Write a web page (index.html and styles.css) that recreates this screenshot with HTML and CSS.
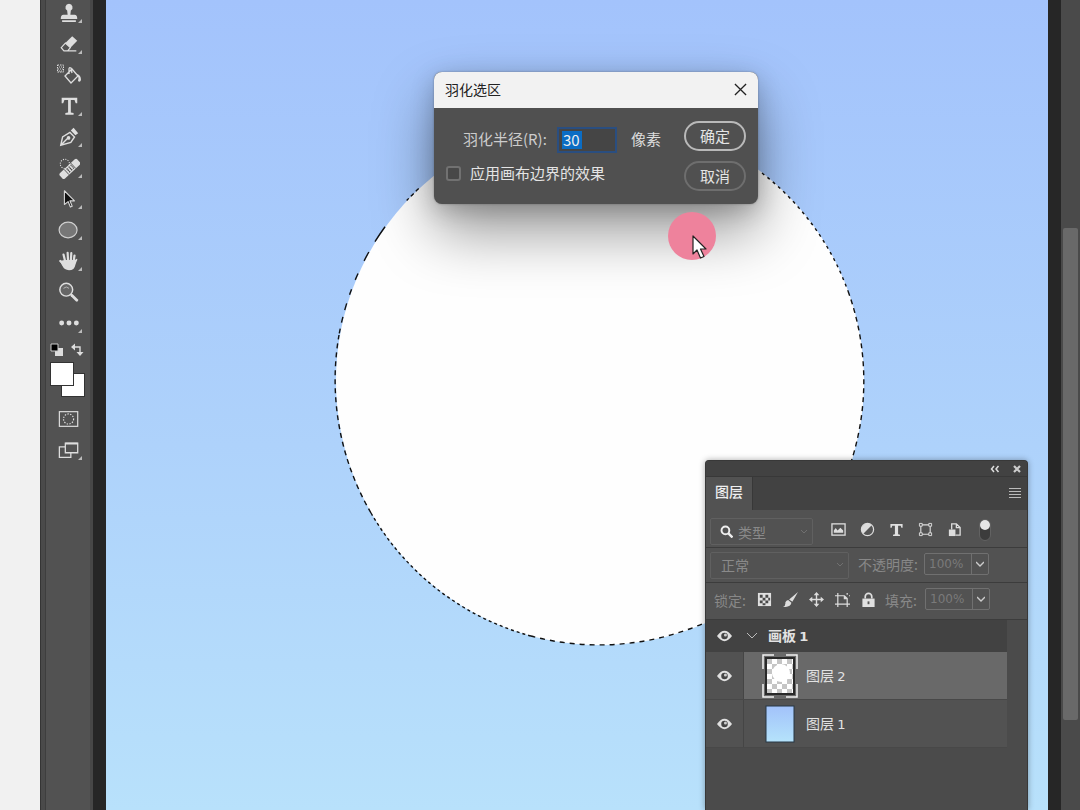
FILE: index.html
```html
<!DOCTYPE html>
<html lang="zh-CN">
<head>
<meta charset="utf-8">
<title>羽化选区</title>
<link rel="stylesheet" href="styles.css">
</head>
<body>
<main class="app">
  <aside class="toolbar" aria-label="工具">
    <div class="tools">
      <button class="tool more" aria-label="仿制图章"><svg viewBox="0 0 24 24"><path fill="#dedede" d="M12 2a4 4 0 0 1 2 7.400l-.5 4.600H18q3 0 3 4.500H3Q3 14 6 14h4.500L10 9.400A4 4 0 0 1 12 2zM4.500 20h15v1.800h-15z"/></svg></button>
      <button class="tool more" aria-label="橡皮擦"><svg viewBox="0 0 24 24"><path fill="#dedede" d="M8 11l7.500-7.500 5.500 5L13.500 16z"/><path fill="none" stroke="#dedede" stroke-width="1.300" d="M8 11l-4.500 5 3 3.500h4l3-3.500zM10 19.600h10"/></svg></button>
      <button class="tool" aria-label="油漆桶"><svg class="wide" viewBox="0 0 28 24"><rect x="2.500" y="2" width="6" height="7" fill="#555" stroke="#ddd" stroke-dasharray="1.500 1"/><path stroke="#ccc" stroke-dasharray="1 1" d="M4 4h4M3 6h5M4 8h4"/><path fill="none" stroke="#dedede" stroke-width="1.300" d="M10 13l7-7 6 7-7 7zM14 11V6q0-2 2-1l1 5"/><path fill="#dedede" d="M22 11q4 1 4 6-1 3-3 1l.5-3z"/></svg></button>
      <button class="tool more" aria-label="文字"><svg viewBox="0 0 24 24"><path fill="#dedede" d="M4 3h17v6h-1.700L18 5.500h-4V19l3 .7V21.500H8v-1.800l3-.7V5.500H7L5.700 9H4z"/></svg></button>
      <button class="tool more" aria-label="钢笔"><svg viewBox="0 0 24 24"><path fill="none" stroke="#dedede" stroke-width="1.500" d="M3 21l2-9 8-5 5 5-4 6-11 3zM3 21l7-7"/><path fill="#dedede" d="M14 5l3-3 5 6-3 2z"/><circle cx="11.500" cy="13" r="2" fill="#dedede"/></svg></button>
      <button class="tool more" aria-label="修复画笔"><svg viewBox="0 0 24 24"><circle cx="7.500" cy="7.500" r="5" fill="none" stroke="#dedede" stroke-width="1.200" stroke-dasharray="1.200 1.400"/><g transform="rotate(-43 13 13)"><rect x="0" y="9" width="26" height="8" rx="2" fill="#dedede"/><path stroke="#555" d="M8 9v8M18 9v8"/><path stroke="#444" stroke-width="1.500" stroke-dasharray="1.500 1.500" d="M10 11h7M10 13h7M10 15h7"/></g></svg></button>
      <button class="tool more" aria-label="直接选择"><svg viewBox="0 0 24 24"><path fill="#111" stroke="#d5d5d5" stroke-width="1.200" stroke-linejoin="round" d="M7 3l11 11h-5l2.500 6-2 .8-2.500-6L7 18z"/></svg></button>
      <button class="tool more" aria-label="椭圆"><svg viewBox="0 0 24 24"><ellipse cx="11" cy="12" rx="9.800" ry="8.500" fill="#777" stroke="#cfcfcf" stroke-width="1.300"/></svg></button>
      <button class="tool more" aria-label="抓手"><svg viewBox="0 0 24 24"><path fill="none" stroke="#dedede" stroke-width="2.400" stroke-linecap="round" d="M8 13L6 5M11 12l-.5-9M14 12l.5-8.500M17 13l1-7M8 17l-5.500-5"/><path fill="#dedede" d="M7 11h11.500l1-1q2-1 1.500 1-1 2-2 5-1 6-7 6-5 0-7.500-5L2 12z"/></svg></button>
      <button class="tool" aria-label="缩放"><svg viewBox="0 0 24 24"><circle cx="9" cy="9.500" r="7" fill="#666" stroke="#dedede" stroke-width="1.600"/><path fill="none" stroke="#bbb" d="M6 8q3-3 6 0"/><path stroke="#dedede" stroke-width="3" stroke-linecap="round" d="M15 15.500L20.500 21"/></svg></button>
      <button class="tool more" aria-label="更多工具"><svg viewBox="0 0 24 24"><g fill="#dedede"><circle cx="4" cy="12" r="2.700"/><circle cx="12" cy="12" r="2.700"/><circle cx="20" cy="12" r="2.700"/></g></svg></button>
    </div>
    <div class="color-actions">
      <button class="mini" aria-label="默认颜色"><svg viewBox="0 0 13 13"><path fill="#ddd" d="M5 5h8v8H5z"/><path fill="#000" stroke="#ccc" d="M1 1h7v7H1z"/></svg></button>
      <button class="mini" aria-label="切换颜色"><svg viewBox="0 0 13 13"><path fill="none" stroke="#ddd" stroke-width="1.400" d="M3 4h6v6"/><path fill="#ddd" d="M0 4l4-3.500v7zM5.500 9h7L9 13z"/></svg></button>
    </div>
    <div class="swatches"><button class="swatch fore" aria-label="前景色"></button><button class="swatch back" aria-label="背景色"></button></div>
    <button class="tool mask" aria-label="快速蒙版"><svg viewBox="0 0 24 24"><rect x="1.500" y="4" width="20" height="16" fill="none" stroke="#ddd" stroke-width="1.300"/><circle cx="11.500" cy="12" r="5.500" fill="none" stroke="#ddd" stroke-width="1.300" stroke-dasharray="1.500 1.500"/></svg></button>
    <button class="tool more" aria-label="屏幕模式"><svg viewBox="0 0 24 24"><path fill="none" stroke="#ddd" stroke-width="1.400" d="M8 4.500h13.500v10.500H8zM8 8.500H1.500V20H14v-5"/><path stroke="#ddd" stroke-width="2" d="M8 5h13.500"/></svg></button>
  </aside>

  <section class="canvas" aria-label="画布">
    <svg class="artwork" width="942" height="810" viewBox="0 0 942 810">
      <circle cx="494" cy="381" r="264" fill="#fefefe"/>
      <g class="ants">
        <path stroke-dasharray="3 4" d="M656 173A264 264 0 0 1 742 291"/>
        <path stroke-dasharray="5 4" d="M742 291A264 264 0 0 1 742 471"/>
        <path stroke-dasharray="5 5" d="M605 620A264 264 0 0 1 425 636"/>
        <path stroke-dasharray="3 3" d="M425 636A264 264 0 0 1 265 513"/>
        <path stroke-dasharray="5 4" d="M265 513A264 264 0 0 1 233 335"/>
        <path stroke-dasharray="0 24 4 3 4 3 3 34 18 12 10 14 7 10 6 9 7 7 6 6 5 6" d="M331 173A264 264 0 0 0 233 335"/>
      </g>
    </svg>

    <form class="dialog" role="dialog" aria-labelledby="dialog-title">
      <header class="dialog-head">
        <h1 id="dialog-title">羽化选区</h1>
        <button type="button" class="close" aria-label="关闭"><svg viewBox="0 0 14 14"><path stroke="#222" stroke-width="1.400" d="M1 1l12 12M13 1L1 13"/></svg></button>
      </header>
      <div class="dialog-body">
        <div class="fields">
          <div class="radius"><label for="radius">羽化半径(R):</label><div class="field"><input id="radius" type="text" value="30"></div><span>像素</span></div>
          <label class="check"><input type="checkbox">应用画布边界的效果</label>
        </div>
        <div class="actions"><button type="button" class="pill main">确定</button><button type="button" class="pill">取消</button></div>
      </div>
    </form>

    <section class="panel" aria-label="图层">
      <div class="panel-top">
        <button aria-label="折叠"><svg width="10" height="8" viewBox="0 0 10 8"><path fill="none" stroke="#ddd" stroke-width="1.500" d="M4 1L1.500 4 4 7M8.500 1L6 4l2.500 3"/></svg></button>
        <button aria-label="关闭面板"><svg width="8" height="8" viewBox="0 0 8 8"><path stroke="#ccc" stroke-width="2.200" d="M1 1l6 6M7 1L1 7"/></svg></button>
      </div>
      <div class="tabs"><button class="tab">图层</button><button class="menu" aria-label="菜单"><svg width="12" height="10" viewBox="0 0 12 10"><path stroke="#bbb" d="M0 .5h12M0 3.500h12M0 6.500h12M0 9.500h12"/></svg></button></div>
      <div class="row filter">
        <div class="select kind"><svg class="lens" viewBox="0 0 12 12"><circle cx="5" cy="5" r="3.600" fill="none" stroke="#eee" stroke-width="1.800"/><path stroke="#eee" stroke-width="2.200" d="M7.500 7.500l4 4"/></svg><select aria-label="类型"><option>类型</option></select><svg class="chev" viewBox="0 0 8 6"><path d="M1 1l3 3 3-3"/></svg></div>
        <div class="filter-icons">
          <button aria-label="像素图层"><svg viewBox="0 0 16 16"><rect x="1" y="2" width="14" height="12" fill="none" stroke="#ddd" stroke-width="1.400"/><path fill="#ddd" d="M3 11.500V9l2-2.500L7 9l3-3 3 3v2.500z"/></svg></button>
          <button aria-label="调整图层"><svg viewBox="0 0 16 16"><circle cx="8" cy="8" r="6.500" fill="#555" stroke="#ddd" stroke-width="1.300"/><path fill="#ddd" d="M3.500 12.500A6.300 6.300 0 0 1 12.500 3.500z"/></svg></button>
          <button aria-label="文字图层"><svg viewBox="0 0 16 16"><path fill="#e0e0e0" d="M1.500 2h13v4h-1.300l-.7-2H9.700v9l2 .5V15h-7.400v-1.500l2-.5V4h-2.800l-.7 2H1.500z"/></svg></button>
          <button aria-label="形状图层"><svg viewBox="0 0 16 16"><path fill="none" stroke="#ddd" stroke-width="1.200" d="M3 3h10v10H3z"/><g fill="#555" stroke="#ddd"><path d="M1.500 1.500h3v3h-3zM11.500 1.500h3v3h-3zM1.500 11.500h3v3h-3zM11.500 11.500h3v3h-3z"/></g></svg></button>
          <button aria-label="智能对象"><svg viewBox="0 0 16 16"><path fill="none" stroke="#ddd" stroke-width="1.400" d="M5 8V2h5l4 4v8H9M10 2v4h4"/><path fill="#ddd" d="M2 8h7v7H2z"/></svg></button>
        </div>
        <button class="toggle" aria-label="启用筛选"></button>
      </div>
      <div class="row blend">
        <div class="select mode"><select aria-label="混合模式"><option>正常</option></select><svg class="chev" viewBox="0 0 8 6"><path d="M1 1l3 3 3-3"/></svg></div>
        <label for="opacity">不透明度:</label>
        <div class="stepper"><input id="opacity" type="text" value="100%"><button aria-label="调整不透明度"><svg viewBox="0 0 8 6"><path d="M0 1l4 4 4-4"/></svg></button></div>
      </div>
      <div class="row lock">
        <span>锁定:</span>
        <div class="lock-icons">
          <button aria-label="锁定透明像素"><svg viewBox="0 0 16 16"><path fill="#e0e0e0" d="M1 1h14v14H1z"/><path fill="#484848" d="M3 3h3v3H3zM9 3h3v3H9zM6 6h3v3H6zM12 6h2v3h-2zM3 9h3v3H3zM9 9h3v3H9zM6 12h3v2H6z"/></svg></button>
          <button aria-label="锁定图像像素"><svg viewBox="0 0 16 16"><path fill="#ddd" d="M16 0L10 10.500 6.500 8zM5.500 8.500l3.500 3q-1 5-9 4.500 3-1 2.500-5 1-2 3-2.500z"/></svg></button>
          <button aria-label="锁定位置"><svg viewBox="0 0 16 16"><path stroke="#ddd" stroke-width="1.500" d="M8 2v12M2 8h12"/><path fill="#ddd" d="M8 0l3 3.500H5zM8 16l3-3.500H5zM0 8l3.500-3v6zM16 8l-3.500-3v6z"/></svg></button>
          <button aria-label="防止自动嵌套"><svg viewBox="0 0 16 16"><path fill="none" stroke="#ddd" stroke-width="1.300" d="M3 1v15M0 4h10l3 3v9M0 13h16M10 4v3h3M13 1v2M15 4h1"/></svg></button>
          <button aria-label="锁定全部"><svg viewBox="0 0 16 16"><path fill="#e0e0e0" d="M1.500 7h13v9h-13z"/><path fill="none" stroke="#e0e0e0" stroke-width="1.800" d="M4.500 7V5a3.500 3.500 0 0 1 7 0v2"/><path stroke="#555" stroke-width="2" d="M8 10v3"/></svg></button>
        </div>
        <label for="fill">填充:</label>
        <div class="stepper"><input id="fill" type="text" value="100%"><button aria-label="调整填充"><svg viewBox="0 0 8 6"><path d="M0 1l4 4 4-4"/></svg></button></div>
      </div>
      <ul class="layers">
        <li class="group"><button class="eye" aria-label="可见性"><svg viewBox="0 0 16 12"><path fill="#e0e0e0" d="M0 6q8-11 16 0-8 11-16 0z"/><circle cx="8" cy="6" r="3.500" fill="#444"/><circle cx="9" cy="5" r="1.600" fill="#ccc"/></svg></button><button class="fold" aria-label="展开"><svg viewBox="0 0 12 8"><path fill="none" stroke="#bbb" d="M1 1l5 5 5-5"/></svg></button><b class="title">画板 <span class="num">1</span></b></li>
        <li class="layer selected"><button class="eye" aria-label="可见性"><svg viewBox="0 0 16 12"><path fill="#e0e0e0" d="M0 6q8-11 16 0-8 11-16 0z"/><circle cx="8" cy="6" r="3.500" fill="#444"/><circle cx="9" cy="5" r="1.600" fill="#ccc"/></svg></button><div class="name"><svg class="thumb" viewBox="0 0 36 44"><defs><pattern id="checks" width="10" height="10" patternUnits="userSpaceOnUse"><path fill="#fff" d="M0 0h10v10H0z"/><path fill="#c5c5c5" d="M0 0h5v5H0zM5 5h5v5H5z"/></pattern></defs><rect x="4" y="4" width="28" height="36" fill="url(#checks)" stroke="#292929" stroke-width="2"/><circle cx="19" cy="19" r="9" fill="#fff"/><path fill="none" stroke="#f2f2f2" stroke-width="1.500" d="M1 15V1h11M24 1h11v14M1 30v13h11M24 43h11V30"/></svg><span class="title">图层 <span class="num">2</span></span></div></li>
        <li class="layer"><button class="eye" aria-label="可见性"><svg viewBox="0 0 16 12"><path fill="#e0e0e0" d="M0 6q8-11 16 0-8 11-16 0z"/><circle cx="8" cy="6" r="3.500" fill="#444"/><circle cx="9" cy="5" r="1.600" fill="#ccc"/></svg></button><div class="name"><svg class="thumb" viewBox="0 0 36 44"><defs><linearGradient id="sky" x2="0" y2="1"><stop stop-color="#a2c2fa"/><stop offset="1" stop-color="#b5e3fb"/></linearGradient></defs><rect x="4" y="4" width="28" height="36" fill="url(#sky)" stroke="#263744"/></svg><span class="title">图层 <span class="num">1</span></span></div></li>
      </ul>
    </section>

    <div class="pointer"><svg width="16" height="24" viewBox="0 0 16 24"><path fill="#fff" stroke="#222" stroke-width="1.200" stroke-linejoin="round" d="M1 1v18l4-4 3.500 8 3.500-1.500-3.500-7.500H14z"/></svg></div>
  </section>
  <div class="scrollbar"><div class="scroll-thumb"></div></div>
</main>
</body>
</html>
```
FILE: styles.css
```css
* { box-sizing: border-box; }
body {
  margin: 0;
  background: #f1f1f1;
  color: #e4e4e4;
  font: 14px/20px "Noto Sans CJK SC", "Noto Sans", sans-serif;
}
button, input, select { font: inherit; color: inherit; }
button { padding: 0; border: 0; background: none; }
svg { display: block; flex: none; }
h1, ul { margin: 0; padding: 0; list-style: none; font-weight: 400; }

.app { display: flex; height: 100vh; padding-left: 40px; overflow: hidden; }

/* Tool strip */
.toolbar {
  width: 53px;
  flex: none;
  padding: 0 2px 0 1px;
  background: #525252;
  border-left: 1px solid #353535;
  border-right: 3px solid #474747;
  box-shadow: inset 4px 0 #4a4a4a, inset 5px 0 #3e3e3e;
}
.tools { display: grid; gap: 1px; margin-top: -2px; }
.tool {
  position: relative;
  display: flex;
  width: 100%;
  height: 30px;
  align-items: center;
  justify-content: center;
  padding-left: 7px;
}
.tool svg { width: 22px; height: 22px; }
.tool .wide { width: 28px; height: 24px; }
.more::after {
  content: "";
  position: absolute;
  right: 6px;
  bottom: 5px;
  border-left: 4px solid transparent;
  border-bottom: 4px solid #bbb;
}
.color-actions { display: flex; gap: 8px; padding: 5px 0 0 8px; }
.mini svg { width: 13px; height: 13px; }
.swatches { display: grid; grid-template-columns: 11px 11px 11px; grid-template-rows: 11px 11px 11px; margin: 6px 0 9px 8px; }
.swatch { border: 1px solid #333; background: #fff; width: 24px; height: 24px; }
.fore { grid-area: 1 / 1; z-index: 1; }
.back { grid-area: 2 / 2; }
.mask { margin-bottom: 1px; }

/* Canvas */
.canvas {
  position: relative;
  flex: 1;
  border-left: 13px solid #262626;
  border-right: 13px solid #262626;
  background: linear-gradient(#a3c3fc, #aed2fb 55%, #b8e1fb);
}
.artwork { position: absolute; left: 0; top: 0; }
.ants { fill: none; stroke: #111; stroke-width: 1.4; }

/* Feather dialog */
.dialog {
  position: absolute;
  left: 328px;
  top: 72px;
  width: 324px;
  overflow: hidden;
  border-radius: 8px;
  background: #505050;
  box-shadow: 0 0 2px #4448, 0 28px 60px #0006, 0 6px 24px #0003;
}
.dialog-head {
  display: flex;
  height: 36px;
  align-items: center;
  justify-content: space-between;
  padding: 0 11px 2px;
  background: #f2f2f2;
  color: #222;
}
.dialog h1 { font-size: 14px; }
.close svg { width: 13px; height: 13px; }
.dialog-body { display: flex; justify-content: space-between; padding: 13px 12px; font-size: 15px; }
.fields { display: grid; gap: 9px; align-content: start; padding-top: 6px; }
.radius { display: grid; grid-template-columns: 94px 60px auto; padding-left: 17px; line-height: 24px; color: #ccc; }
.radius span { padding-left: 14px; color: #ddd; }
.field { height: 26px; border: 2px solid #2a4e80; background: #454545; }
.field input {
  display: block;
  width: 20px;
  height: 18px;
  margin: 2px 0 0 3px;
  padding: 0 1px;
  border: 0;
  background: #0b6dc4;
  color: #eee;
  line-height: 18px;
}
.check { display: flex; align-items: center; gap: 9px; line-height: 22px; }
.check input { appearance: none; width: 15px; height: 15px; margin: 0; border: 2px solid #717171; border-radius: 3px; background: #484848; }
.actions { display: grid; gap: 10px; }
.pill { width: 62px; height: 30px; border: 2px solid #6e6e6e; border-radius: 15px; line-height: 24px; }
.main { border-color: #b9b9b9; }

/* Layers panel */
.panel {
  position: absolute;
  left: 599px;
  top: 460px;
  bottom: 0;
  width: 323px;
  border: 1px solid #383838;
  border-bottom: 0;
  border-radius: 4px 4px 0 0;
  background: #4b4b4b;
  box-shadow: 0 0 6px #0005;
}
.panel-top { display: flex; height: 15px; align-items: center; justify-content: flex-end; gap: 13px; padding-right: 6px; background: #424242; border-radius: 4px 4px 0 0; }
.tabs { display: flex; height: 34px; justify-content: space-between; background: #424242; border-top: 1px solid #383838; }
.tab { width: 47px; background: #525252; color: #eee; line-height: 26px; padding-bottom: 6px; border-right: 1px solid #383838; font-weight: 500; }
.menu { padding: 0 6px 2px 0; }
.row { display: flex; align-items: center; background: #525252; border-bottom: 1px solid #3c3c3c; color: #888; }
.row button svg { width: 15px; height: 15px; }
.filter { height: 38px; padding: 6px 4px 0; }
.select { position: relative; display: flex; align-items: center; border: 1px solid #606060; border-radius: 2px; height: 27px; }
.select select { appearance: none; flex: 1; min-width: 0; border: 0; background: none; padding: 0; color: #8a8a8a; }
.chev { width: 8px; height: 6px; margin-right: 4px; }
.chev path { fill: none; stroke: #707070; }
.kind { width: 103px; padding-left: 9px; }
.lens { width: 13px; height: 13px; margin-right: 5px; }
.filter-icons { display: flex; flex: none; gap: 14px; padding: 0 17px 4px 18px; }
.toggle { display: flex; width: 12px; height: 22px; margin-bottom: 4px; border-radius: 6px; background: #3c3c3c; border: 1px solid #626262; }
.toggle::before { content: ""; width: 10px; height: 10px; border-radius: 50%; background: #e6e6e6; }
.blend { height: 35px; padding: 0 4px; }
.mode { width: 139px; padding-left: 10px; margin-right: 9px; }
.blend label { width: 66px; padding-bottom: 2px; }
.stepper { display: flex; width: 65px; height: 22px; margin-bottom: 2px; border: 1px solid #707070; border-radius: 2px; }
.stepper input { width: 46px; min-width: 0; padding: 0 0 0 4px; border: 0; background: none; color: #7a7a7a; font: 12px "DejaVu Sans", sans-serif; }
.stepper button { flex: 1; display: flex; align-items: center; justify-content: center; border-left: 1px solid #707070; }
.row .stepper svg { width: 8px; height: 6px; }
.stepper path { fill: none; stroke: #ccc; stroke-width: 1.4; }
.lock { height: 37px; padding: 0 8px 3px; }
.lock > span { width: 43px; }
.lock-icons { display: flex; gap: 11px; margin-right: 9px; }
.lock label { width: 40px; }
.layers { width: 301px; color: #e2e2e2; }
.group, .layer { display: flex; }
.group { height: 32px; align-items: center; background: #424242; }
.eye { display: flex; width: 37px; flex: none; align-items: center; justify-content: center; align-self: stretch; }
.eye svg { width: 15px; height: 12px; }
.fold { width: 18px; display: flex; justify-content: center; }
.fold svg { width: 12px; height: 8px; }
.title { padding-bottom: 2px; }
.num { font: 13px "DejaVu Sans", sans-serif; }
b .num { font-weight: 700; }
.group b { padding-left: 7px; }
.layer { height: 48px; background: #525252; border-bottom: 1px solid #484848; }
.name { display: flex; flex: 1; align-items: center; gap: 8px; padding-left: 18px; border-left: 1px solid #454545; }
.selected .name { background: #696969; }
.thumb { width: 36px; height: 44px; }

/* Click highlight with mouse pointer */
.pointer { position: absolute; left: 562px; top: 212px; width: 48px; height: 48px; border-radius: 50%; background: #ee829c; }
.pointer svg { margin: 23px 0 0 24px; }

/* Document scroll bar */
.scrollbar { width: 19px; flex: none; padding: 228px 2px 0; background: #4a4a4a; }
.scroll-thumb { height: 492px; border-radius: 2px; background: #696969; }
```
